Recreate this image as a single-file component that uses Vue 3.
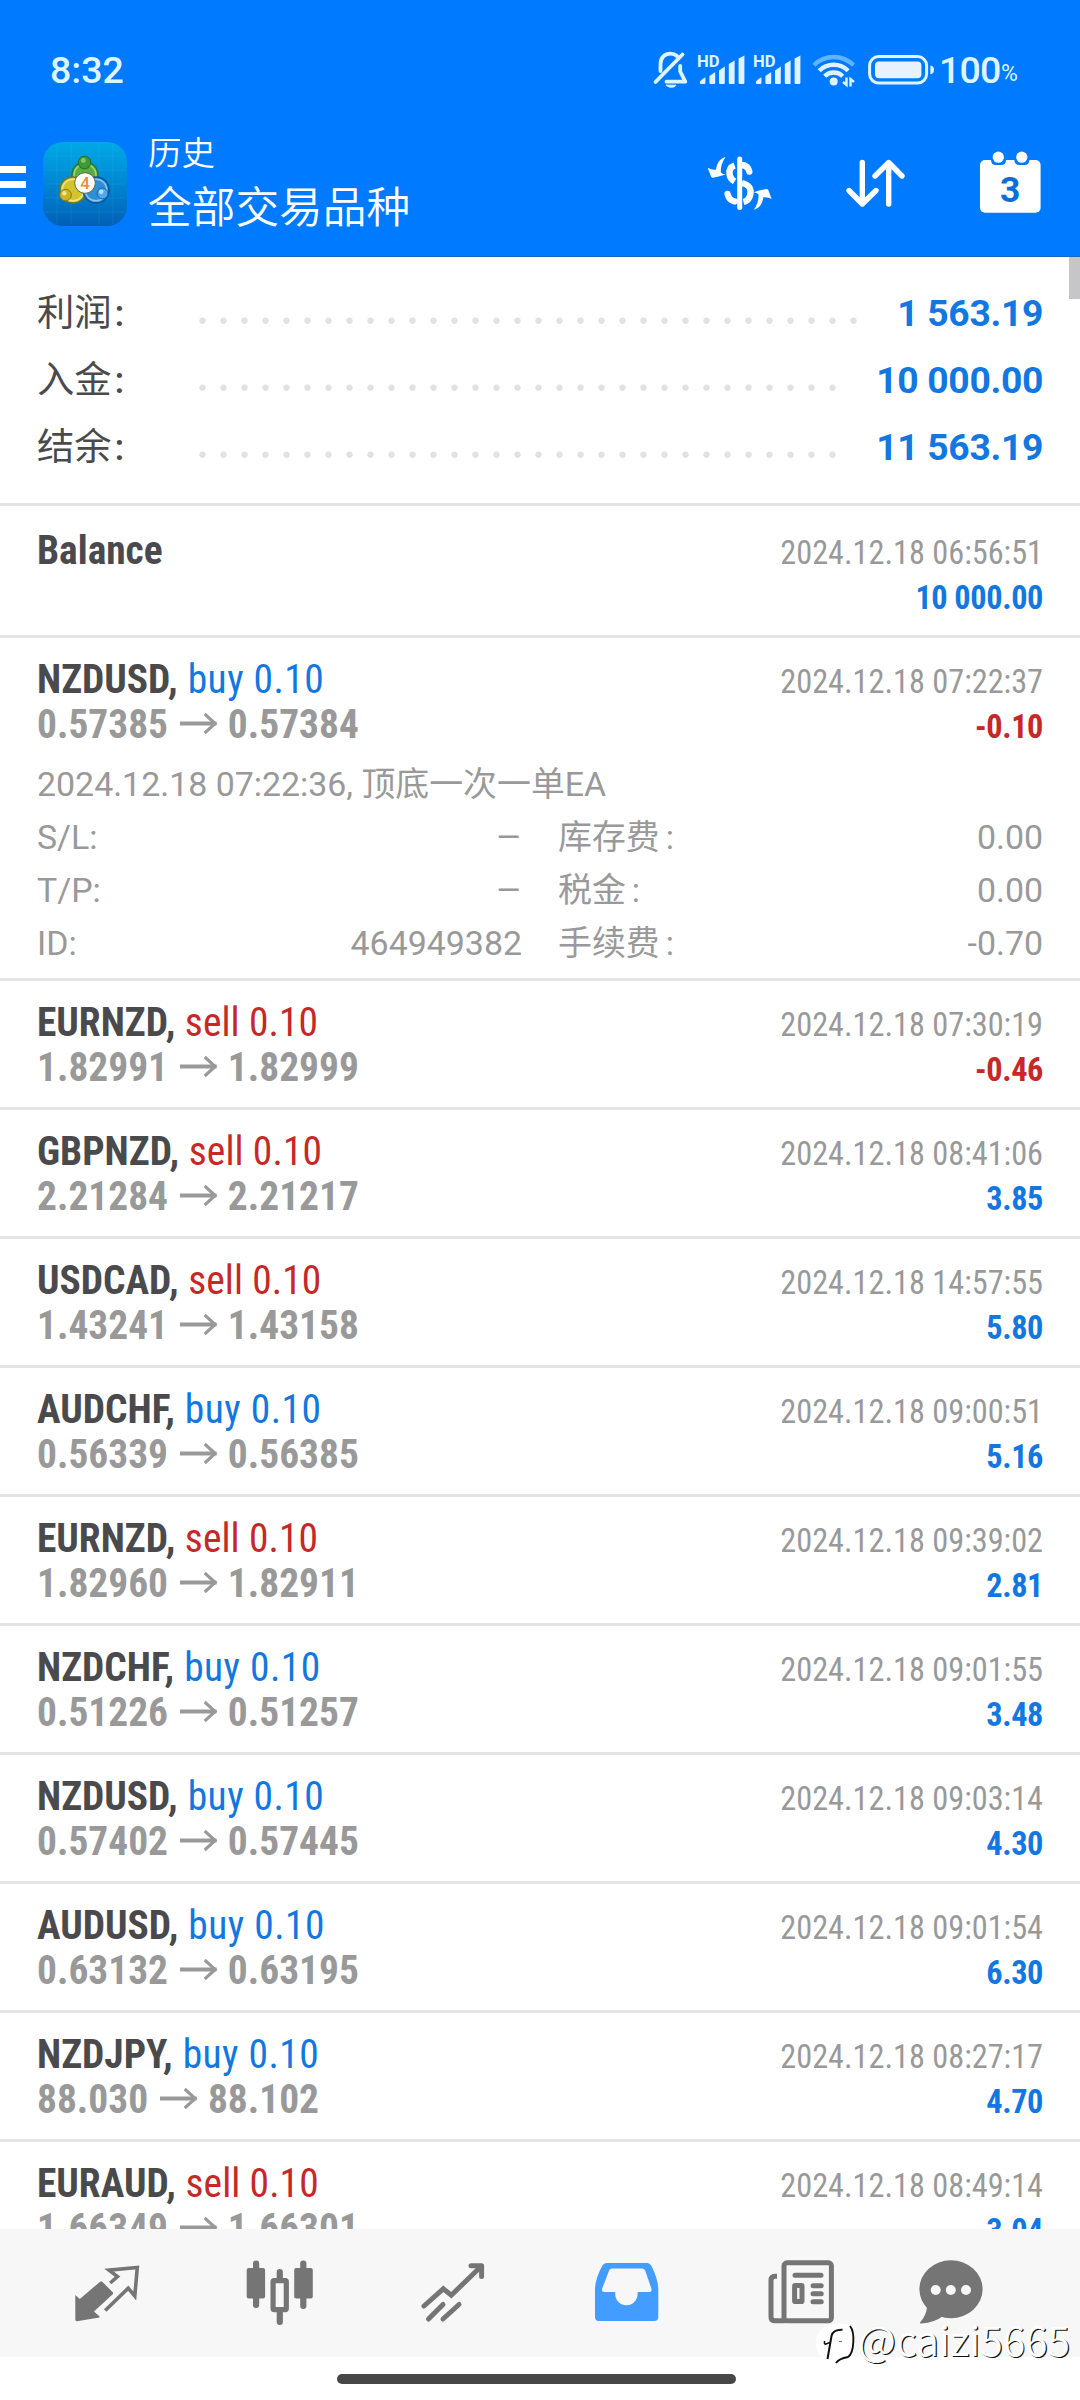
<script setup>
const summary = [
  { label: '利润', value: '1 563.19', dots: 32 },
  { label: '入金', value: '10 000.00', dots: 31 },
  { label: '结余', value: '11 563.19', dots: 31 },
]

const deals = [
  {
    symbol: 'NZDUSD', side: 'buy', from: '0.57385', to: '0.57384', time: '07:22:37', profit: '-0.10',
    details: {
      comment: '2024.12.18 07:22:36, 顶底一次一单EA',
      rows: [
        ['S/L', '–', '库存费', '0.00'],
        ['T/P', '–', '税金', '0.00'],
        ['ID', '464949382', '手续费', '-0.70'],
      ],
    },
  },
  { symbol: 'EURNZD', side: 'sell', from: '1.82991', to: '1.82999', time: '07:30:19', profit: '-0.46' },
  { symbol: 'GBPNZD', side: 'sell', from: '2.21284', to: '2.21217', time: '08:41:06', profit: '3.85' },
  { symbol: 'USDCAD', side: 'sell', from: '1.43241', to: '1.43158', time: '14:57:55', profit: '5.80' },
  { symbol: 'AUDCHF', side: 'buy', from: '0.56339', to: '0.56385', time: '09:00:51', profit: '5.16' },
  { symbol: 'EURNZD', side: 'sell', from: '1.82960', to: '1.82911', time: '09:39:02', profit: '2.81' },
  { symbol: 'NZDCHF', side: 'buy', from: '0.51226', to: '0.51257', time: '09:01:55', profit: '3.48' },
  { symbol: 'NZDUSD', side: 'buy', from: '0.57402', to: '0.57445', time: '09:03:14', profit: '4.30' },
  { symbol: 'AUDUSD', side: 'buy', from: '0.63132', to: '0.63195', time: '09:01:54', profit: '6.30' },
  { symbol: 'NZDJPY', side: 'buy', from: '88.030', to: '88.102', time: '08:27:17', profit: '4.70' },
  { symbol: 'EURAUD', side: 'sell', from: '1.66349', to: '1.66301', time: '08:49:14', profit: '3.04' },
]
</script>

<template>
  <div class="screen">
    <header class="top">
      <div class="status">
        <span class="clock">8:32</span>
        <div class="status-icons">
          <svg class="bell" width="44" height="44" viewBox="0 0 44 44" fill="none" stroke="#def4ff" stroke-width="3.8" stroke-linecap="round" stroke-linejoin="round">
            <path d="M11.5 23V16C11.5 9.5 16 5.7 21.5 5.7C24 5.7 26 6.3 28 8" />
            <path d="M31.2 18V23.5L36.3 33.7H17.5" />
            <path d="M6.5 34L33.5 6.5" />
            <path d="M17.5 37.2H27C25.6 39.9 18.9 39.9 17.5 37.2Z" fill="#def4ff" stroke-width="1" />
          </svg>
          <svg v-for="n in 2" :key="n" class="signal" width="50" height="36" viewBox="0 0 50 36" fill="#def4ff">
            <text x="0" y="14.6" font-size="16.6" font-weight="700">HD</text>
            <path d="M2.8 30.5Q3 28 8.4 25.2V31Q8.4 32 7.4 32H3.8Q2.8 32 2.8 31Z" />
            <path d="M12.4 24L18.2 20V31Q18.2 32 17.2 32H13.4Q12.4 32 12.4 31Z" />
            <path d="M22 18.5L27.8 14.5V31Q27.8 32 26.8 32H23Q22 32 22 31Z" />
            <path d="M31.8 12L37.6 8.5V31Q37.6 32 36.6 32H32.8Q31.8 32 31.8 31Z" />
            <path d="M41.6 6.5L47.4 3.5V31Q47.4 32 46.4 32H42.6Q41.6 32 41.6 31Z" />
          </svg>
          <svg class="wifi" width="48" height="38" viewBox="0 0 48 38" fill="none" stroke="#def4ff" stroke-width="4.4">
            <path d="M2.9 13.2A28 28 0 0 1 42.5 13.2" stroke="#5fb4ff" />
            <path d="M8.2 18.8A20.5 20.5 0 0 1 37.2 18.8" />
            <path d="M13.7 24.3A12.7 12.7 0 0 1 31.7 24.3" />
            <circle cx="22.7" cy="29.5" r="4" fill="#def4ff" stroke="none" />
            <path d="M35.5 25.5V33L32 30M39.5 34.5V27L43 30" stroke-width="2.4" />
          </svg>
          <svg class="battery" width="68" height="32" viewBox="0 0 68 32" fill="none">
            <rect x="1.6" y="2.6" width="57" height="26.4" rx="9" stroke="#def4ff" stroke-width="3" />
            <rect x="7" y="7.5" width="46.4" height="16.8" rx="4" fill="#e6f3ff" />
            <path d="M62.4 11.5Q66 12 66 15.8Q66 19.8 62.4 20.3Z" fill="#def4ff" />
          </svg>
          <span class="percent">100</span><span class="pct">%</span>
        </div>
      </div>

      <div class="bar">
        <div class="menu"><i></i><i></i><i></i></div>
        <svg class="logo" width="84" height="84" viewBox="0 0 84 84">
          <defs>
            <linearGradient id="tile" x1="0" y1="0" x2="0" y2="1">
              <stop offset="0" stop-color="#00a9e6" />
              <stop offset="0.5" stop-color="#0086d2" />
              <stop offset="1" stop-color="#005fb6" />
            </linearGradient>
          </defs>
          <rect width="84" height="84" rx="20" fill="url(#tile)" />
          <path d="M14 2V82M28 2V82M56 2V82M70 2V82M2 14H82M2 28H82M2 42H82M2 56H82M2 70H82" stroke="#4fc3f0" stroke-opacity="0.14" stroke-width="1" />
          <circle cx="42" cy="33" r="13" fill="#58ae42" stroke="#2b7a2b" stroke-width="1.5" />
          <circle cx="42" cy="33" r="11" fill="none" stroke="#a4d480" stroke-width="1.4" />
          <circle cx="30" cy="48" r="13" fill="#d3c42e" stroke="#6d7a20" stroke-width="1.5" />
          <circle cx="30" cy="48" r="10.8" fill="none" stroke="#eee588" stroke-width="1.4" />
          <circle cx="53" cy="48" r="13" fill="#2f8ed6" stroke="#0d5499" stroke-width="1.5" />
          <circle cx="53" cy="48" r="10.8" fill="none" stroke="#86c8f2" stroke-width="1.4" />
          <circle cx="41.5" cy="20.500" r="6.300" fill="#3f9a35" stroke="#226f22" />
          <circle cx="40.3" cy="18.500" r="2.400" fill="#86c66c" />
          <circle cx="22.5" cy="53" r="5.800" fill="#cdb322" stroke="#857a16" />
          <circle cx="21.3" cy="51.200" r="2.200" fill="#f0e78c" />
          <circle cx="59.5" cy="51.500" r="5.400" fill="#4fabeb" stroke="#1467ac" />
          <circle cx="58.2" cy="49.700" r="2.200" fill="#b5e2fb" />
          <circle cx="42" cy="41" r="10.300" fill="#fff" stroke="#6b6b4a" stroke-width="1" />
          <text x="42" y="47" text-anchor="middle" font-size="17" font-weight="500" fill="#f28a2e">4</text>
        </svg>
        <div class="heading">
          <span class="small">历史</span>
          <span class="big">全部交易品种</span>
        </div>
        <svg class="act dollar" width="80" height="80" viewBox="0 0 80 80" fill="none" stroke="#fff" stroke-width="6.4">
          <path id="swap" d="M25.7 17C19.5 18.6 17 23.5 16 29.6Q11.5 30 7.7 27.8L11 36.5Q12 38.2 14 37.5Q19.5 36.8 25.6 34.6Q22.5 34.4 20.8 32.2Q20.6 23.5 25.7 17Z" fill="#fff" stroke="none" />
          <use href="#swap" transform="rotate(180 39.7 43.4)" />
          <path d="M39.7 19V67.5" stroke-width="5" stroke-linecap="round" />
          <path d="M34.6 25.4C29.8 27.2 29 31 29.6 34.5C30.2 38.5 32 40 34.6 41.6" />
          <path d="M42 25C46.5 25.4 48.6 28 49.3 31.6" stroke-linecap="round" />
          <path d="M42 43C50 45 51.3 49 50.3 54.5C49.3 59.5 47 61.2 43.5 62" />
          <path d="M27.6 54C28.4 58.3 31 60.6 34.6 61.4" stroke-linecap="round" />
        </svg>
        <svg class="act sort" width="64" height="80" viewBox="0 0 64 80" fill="none" stroke="#fff" stroke-width="5.4" stroke-linecap="round" stroke-linejoin="round">
          <path d="M20.3 22.5V63M7 50.5L20.3 64L34 50.5" />
          <path d="M46.7 64V23M33 36L46.7 22.5L60 36" />
        </svg>
        <svg class="act" width="64" height="80" viewBox="0 0 64 80">
          <rect x="2" y="20" width="60.6" height="52.7" rx="5" fill="#fff" />
          <path d="M13 18V20Q13 25 18 25H23Q28 25 28 20V18ZM36.4 18V20Q36.4 25 41.4 25H46.4Q51.4 25 51.4 20V18Z" fill="#007aff" />
          <circle cx="20.3" cy="17.2" r="5.6" fill="#fff" />
          <circle cx="43.8" cy="17.2" r="5.6" fill="#fff" />
          <text x="32.3" y="61.5" text-anchor="middle" font-size="35.5" font-weight="700" fill="#0a6fd8">3</text>
        </svg>
      </div>
    </header>

    <main class="list">
      <i class="thumb"></i>
      <section class="summary">
        <div v-for="s in summary" :key="s.label" class="sum-row">
          <span class="sum-label">{{ s.label }}<b>:</b></span>
          <span class="dots" :style="{ width: s.dots * 21 + 'px' }"></span>
          <span class="sum-value">{{ s.value }}</span>
        </div>
      </section>

      <section class="deal balance">
        <div class="head">
          <div class="left"><p><strong>Balance</strong></p></div>
          <div class="right"><p class="time">2024.12.18 06:56:51</p><p class="profit">10 000.00</p></div>
        </div>
      </section>

      <section v-for="(d, i) in deals" :key="i" class="deal">
        <div class="head">
          <div class="left">
            <p><strong>{{ d.symbol }},</strong> <span :class="d.side">{{ d.side }} 0.10</span></p>
            <p class="price">
              {{ d.from }}<svg class="arrow" width="44" height="24" viewBox="0 0 44 24" fill="none" stroke="#999" stroke-width="3.8"><path d="M1.5 12.5H40" /><path d="M27.5 3L38.5 12.5L27.5 22" stroke-width="3.2" /></svg>{{ d.to }}
            </p>
          </div>
          <div class="right">
            <p class="time">2024.12.18 {{ d.time }}</p>
            <p class="profit" :class="{ loss: d.profit.startsWith('-') }">{{ d.profit }}</p>
          </div>
        </div>
        <div v-if="d.details" class="details">
          <p>{{ d.details.comment }}</p>
          <div v-for="r in d.details.rows" :key="r[0]" class="pair">
            <div class="cell first"><span>{{ r[0] }}:</span><span :class="{ dash: r[1] === '–' }">{{ r[1] }}</span></div>
            <div class="cell"><span>{{ r[2] }}<b>:</b></span><span>{{ r[3] }}</span></div>
          </div>
        </div>
      </section>
    </main>

    <nav class="tabs">
      <svg viewBox="0 0 80 80" fill="#757575">
        <path d="M8.3 42L12.8 46L33.4 28.4L35 28.4L46 39.6V41L27 58.4L32.4 63.2V64.6L10 68.2Q8.3 68.4 8.3 66.5Z" />
        <path d="M43.2 30L50.5 23.6L42 17.2L70.3 14.4L67.8 43L61.2 35.2L38.2 57.5" fill="none" stroke="#757575" stroke-width="3.6" />
      </svg>
      <svg viewBox="0 0 80 80" fill="#757575">
        <rect x="6.7" y="15" width="18.4" height="30.5" rx="2" /><rect x="13" y="7.4" width="6.2" height="47.5" rx="3" />
        <rect x="54.2" y="15" width="18.6" height="30.5" rx="2" /><rect x="60.2" y="7.4" width="6.2" height="48.6" rx="3" />
        <rect x="36.7" y="16" width="6.2" height="12" rx="3" /><rect x="36.7" y="56" width="6.2" height="16" rx="3" />
        <rect x="33.1" y="27.6" width="13.2" height="29" rx="1" fill="#f7f7f7" stroke="#757575" stroke-width="5.2" />
      </svg>
      <svg viewBox="0 0 80 80" fill="none" stroke="#757575" stroke-width="5" stroke-linecap="round" stroke-linejoin="round">
        <path d="M11 53L30.3 35.8L38.3 42.2L68 13.5" stroke-linejoin="miter" />
        <path d="M58 12.8H68.6V23.5" />
        <path d="M15.5 66L30 51.5M30 66L46 51.5" />
      </svg>
      <svg viewBox="0 0 80 80">
        <path d="M20.6 10H61.4Q64 10 65.2 12.6Q72.3 26 72.3 37V64Q72.3 68 68.3 68H13Q9 68 9 64V37Q9 26 16.4 12.6Q18 10 20.6 10Z" fill="#439cff" />
        <path d="M26 15.4H56.2Q58 15.4 59 17.3L65.4 35.5Q66.2 39 63.5 39H51.6V41A11.2 11.2 0 0 1 29.2 41V39H18Q15.4 39 16.2 35.5L23.2 17.3Q24 15.4 26 15.4Z" fill="#f7f7f7" />
      </svg>
      <svg viewBox="0 0 80 80" fill="none" stroke="#757575" stroke-width="5">
        <rect x="25" y="9.8" width="47.4" height="58" rx="3" />
        <path d="M18 23.2H16Q12 23.2 12 27.4V64Q12 67.8 16 67.8H26" />
        <path d="M36 22.3H62M54 32.7H62.2M54 40.7H62.2M54 48.7H62.2" stroke-linecap="round" />
        <rect x="35.6" y="32.6" width="7.4" height="16" rx="0.6" />
      </svg>
      <svg viewBox="0 0 80 80" fill="#757575">
        <ellipse cx="40" cy="36.2" rx="31.6" ry="29" />
        <path d="M16 54Q15.5 62 9 69.6Q8.6 70.6 10 70.5Q24 69.5 32 63Z" />
        <g fill="#f7f7f7"><circle cx="24.7" cy="37" r="5" /><circle cx="39.8" cy="37" r="5" /><circle cx="55" cy="37" r="5" /></g>
      </svg>
    </nav>
    <footer class="home"><i></i></footer>

    <div class="mark">
      <svg width="46" height="48" viewBox="0 0 46 48" fill="none">
        <path d="M20 4H34Q40 6 41.5 14Q43 26 36 35L23 40Q6 42 4 26Q3 8 20 4Z" fill="#fff" />
        <path d="M15.5 39L19.5 16Q21 9.5 30.5 9.8" stroke="#111" stroke-width="2" />
        <path d="M12.5 24.5L18 22.5M12.5 24V21" stroke="#111" stroke-width="1.5" />
        <path d="M38 6Q42 11 41.3 22Q40.8 34 36 37Q27 38.5 24 43" stroke="#111" stroke-width="1.9" />
        <path d="M27 21.5H30" stroke="#777" stroke-width="1.2" />
      </svg>
      <span>@caizi5665</span>
    </div>
  </div>
</template>

<style>
body { background: #fff; }
</style>

<style scoped>
.screen {
  position: relative;
  width: 1080px;
  height: 2400px;
  overflow: hidden;
  display: flex;
  flex-direction: column;
  background: #fff;
  font-family: Roboto, "Noto Sans CJK SC", sans-serif;
  color: #4a4a4d;
}
p { margin: 0; }
b { font-weight: inherit; }
.top { height: 257px; flex: none; background: #007aff; color: #fff; box-shadow: inset 0 -1px #1568c4; }
.status { height: 126px; display: flex; justify-content: space-between; padding: 0 61px 0 50px; color: #def4ff; }
.clock { font-size: 37.5px; line-height: 40px; font-weight: 500; padding-top: 50px; }
.status-icons { display: flex; align-items: flex-start; }
.bell { margin-top: 48px; margin-right: 4px; }
.signal { margin: 52px 6px 0 0; }
.signal + .wifi { margin: 52px 0 0 2px; }
.battery { margin: 54px 0 0 9px; }
.percent { width: 62px; font-size: 37.5px; line-height: 40px; font-weight: 500; padding-top: 50px; margin-left: 3px; letter-spacing: -0.8px; white-space: nowrap; }
.pct { width: 18px; font-size: 23px; line-height: 24px; font-weight: 450; padding-top: 62px; }
.bar { height: 131px; display: flex; }
.menu { width: 42.5px; padding-top: 39.5px; }
.menu i { display: block; width: 26px; height: 7.3px; margin-bottom: 8.4px; background: #fff; }
.logo { margin-top: 16px; }
.heading { flex: 1; padding: 0 0 0 21.5px; display: flex; flex-direction: column; font-family: "Noto Sans CJK SC", sans-serif; font-weight: 350; }
.small { font-size: 33.5px; line-height: 50px; }
.big { font-size: 43.7px; line-height: 60px; margin-top: -2px; }
.act { margin-top: 14px; }
.dollar { margin-right: 62px; }
.sort { margin-right: 72px; }
.act:last-child { margin-right: 38px; }

.list { flex: none; height: 1972px; overflow: hidden; position: relative; }
.thumb { position: absolute; right: 0; top: 0; width: 11px; height: 42px; background: #c6c6c8; }
.summary { box-sizing: border-box; height: 249px; padding: 23px 37px 0; border-bottom: 3px solid #e4e4e4; }
.sum-row { display: flex; height: 67px; line-height: 67px; font-size: 37.3px; }
.sum-label { width: 155px; }
.sum-label b { font-weight: 500; margin-left: 3px; }
.dots { height: 67px; background: radial-gradient(circle at 10.5px 40.7px, #e2e2e4 2.8px, transparent 3.6px) 0 0 / 21px 67px; }
.sum-value { margin-left: auto; font-weight: 700; color: #1277e0; letter-spacing: -0.35px; }

.deal { border-bottom: 3px solid #e4e4e4; }
.balance { padding-top: 3px; }
.head { height: 126px; padding: 0 37px; display: flex; justify-content: space-between; font-family: "Roboto Condensed", Roboto, sans-serif; line-height: 45px; white-space: nowrap; }
.left { padding-top: 18px; font-size: 41.5px; transform: scaleX(0.95); transform-origin: 0 0; }
.right { padding-top: 21px; font-size: 33.7px; text-align: right; transform: scaleX(0.959); transform-origin: 100% 0; }
.price { font-weight: 700; color: #999; }
.arrow { margin: 0 8px 0 11px; vertical-align: 3px; }
.buy { color: #1277e0; letter-spacing: 0.5px; margin-left: 1px; }
.sell { color: #c62828; letter-spacing: 0.1px; margin-left: 0.5px; }
.time { color: #999; }
.profit { font-weight: 700; color: #1277e0; letter-spacing: -0.4px; }
.profit.loss { color: #c62828; }
.details { margin-top: -6px; padding: 0 37px 8px; font-size: 33.9px; line-height: 53px; color: #999; font-weight: 380; }
.pair { display: flex; }
.cell { flex: 1; display: flex; justify-content: space-between; }
.cell.first { flex: none; width: 485px; margin-right: 36px; }
.cell b { margin-left: 6px; }
.dash { transform: scaleX(1.2); transform-origin: 100% 0; }

.tabs { flex: none; height: 128px; background: #f7f7f7; display: flex; padding-left: 67px; }
.tabs svg { width: 80px; height: 80px; margin: 24px 93px 0 0; flex: none; }
.tabs svg:nth-child(5) { margin-right: 72px; }
.tabs svg:last-child { margin-right: 0; }
.home { flex: 1; display: flex; justify-content: center; padding-top: 17px; }
.home i { width: 399px; height: 10px; border-radius: 5px; background: #474747; margin-right: 7px; }
.mark { position: absolute; left: 812px; top: 2320px; display: flex; color: #fff; }
.mark span { font: 350 40.5px/48px "Noto Sans CJK SC", sans-serif; margin-top: -5px; text-shadow: 1.2px 1.2px 0 #111; letter-spacing: 0.2px; }
</style>
